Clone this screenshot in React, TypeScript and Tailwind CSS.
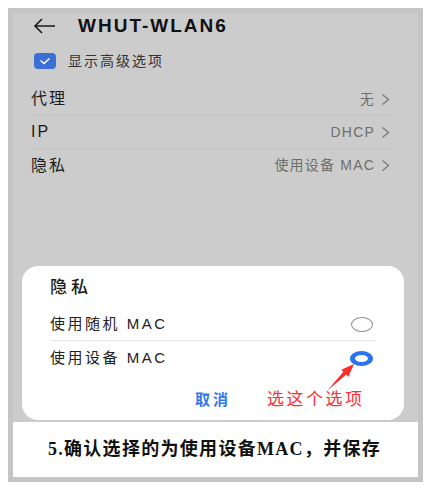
import React from 'react';

const sans = "font-['Liberation_Sans','Noto_Sans_CJK_SC',sans-serif]";

function Chevron() {
  return (
    <svg width="9" height="13" viewBox="0 0 9 13" className="ml-[6px]">
      <path d="M1.5 1.5 L7.5 6.5 L1.5 11.5" fill="none" stroke="#7a7a7a" strokeWidth="1.3" />
    </svg>
  );
}

function Row({ label, value, last }: { label: string; value: string; last?: boolean }) {
  return (
    <div className={`mr-[25px] flex h-[33px] items-center ${last ? '' : 'border-b border-[#c2c2c2]'}`}>
      <span className="flex-1 text-[16px] tracking-[2px] text-[#1c1c1c]">{label}</span>
      <span className="text-[14px] tracking-[1.2px] text-[#6e6e6e]">{value}</span>
      <span className="mr-[3px]"><Chevron /></span>
    </div>
  );
}

export default function App() {
  return (
    <div className={`h-[489px] w-[425px] bg-white pl-[8px] pt-[8px] ${sans}`}>
      <div className="flex h-[474px] w-[415px] flex-col border-[5px] border-[#c5c5c5] bg-[#cccccc]">
        {/* header */}
        <div className="flex h-[26px] items-center pl-[20px]">
          <svg width="23" height="16" viewBox="0 0 23 16">
            <path d="M22 8 H2 M9 1 L2 8 L9 15" fill="none" stroke="#1a1a1a" strokeWidth="1.6" />
          </svg>
          <span className="ml-[22px] text-[19px] font-bold tracking-[2px] text-[#111]">WHUT-WLAN6</span>
        </div>

        {/* advanced options */}
        <div className="flex h-[44px] items-center pl-[21px]">
          <div className="flex h-[16px] w-[22px] items-center justify-center rounded-[4px] bg-[#3b6fd6]">
            <svg width="12" height="8" viewBox="0 0 12 8">
              <path d="M1.5 3.5 L5 6.5 L10.5 1.5" fill="none" stroke="white" strokeWidth="1.6" />
            </svg>
          </div>
          <span className="ml-[12px] text-[14px] tracking-[2px] text-[#333]">显示高级选项</span>
        </div>

        <div className="pl-[18px]">
          <Row label="代理" value="无" />
          <Row label="IP" value="DHCP" />
          <Row label="隐私" value="使用设备 MAC" last />
        </div>

        <div className="flex-1" />

        {/* dialog */}
        <div className="relative ml-[9px] mr-[14px] rounded-[16px] bg-white">
          <div className="flex h-[43px] items-center pl-[28px] text-[17px] font-medium tracking-[4px] text-[#1a1a1a]">隐私</div>
          <div className="mx-[28px] flex h-[32px] items-center border-b border-[#e6e6e6] pr-[3px]">
            <span className="flex-1 text-[15px] tracking-[2.5px] text-[#222]">使用随机 MAC</span>
            <div className="h-[15px] w-[22px] rounded-[50%] border border-[#8e8e8e]" />
          </div>
          <div className="mx-[28px] flex h-[34px] items-center pr-[3px]">
            <span className="flex-1 text-[15px] tracking-[2.5px] text-[#222]">使用设备 MAC</span>
            <div className="h-[15px] w-[23px] rounded-[50%] border-x-[5px] border-y-[4px] border-[#2a74ee] bg-white" />
          </div>
          <div className="flex h-[45px] items-center pt-[5px]">
            <span className="ml-[173px] text-[15px] font-bold tracking-[3px] text-[#2f78f0]">取消</span>
            <span className="ml-[36px] text-[17px] tracking-[2.5px] text-[#ff2f2f]">选这个选项</span>
          </div>
          <svg className="absolute left-[300px] top-[93px]" width="40" height="40" viewBox="0 0 40 40">
            <polygon points="32,5 26.3,17.7 24.2,15.6 5,32 21.4,12.8 19.3,10.7" fill="#ff2a2a" />
          </svg>
        </div>

        {/* caption */}
        <div className="mt-[2px] flex h-[55px] items-center justify-center bg-white pr-[2px]">
          <span className="font-['Liberation_Serif','Noto_Sans_CJK_SC',serif] text-[18px] font-bold tracking-[1.3px] text-[#111]">
            5.确认选择的为使用设备MAC，并保存
          </span>
        </div>
      </div>
    </div>
  );
}
